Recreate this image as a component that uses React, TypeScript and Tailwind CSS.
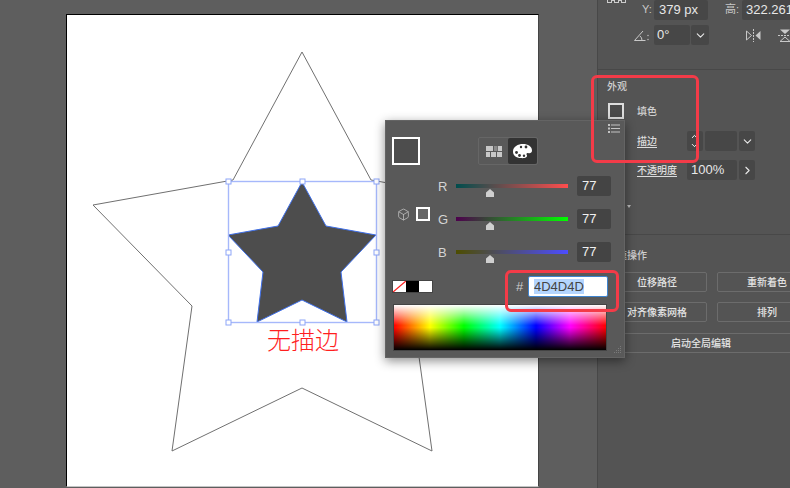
import React from 'react';
import { Box, ChevronDown, ChevronRight, ChevronUp } from 'lucide-react';

const bigStar = '302,52 371,180 511,205 412,306 432,451 302,388 172,451 192,306 93,205 233,180';
const smallStar = '302,182 326,226 376,235 341,272 347,322 302,300 257,322 263,272 228,235 278,226';
const handles = [[228, 181], [302, 181], [376, 181], [228, 252], [376, 252], [228, 322], [302, 322], [376, 322]];

function Field({ className = '', children }: { className?: string; children?: React.ReactNode }) {
    return (
        <div className={`h-5 shrink-0 flex items-center rounded-[2px] bg-[#474747] text-[13px] text-[#e8e8e8] ${className}`}>
            {children}
        </div>
    );
}

function ActionButton({ label, className = '' }: { label: string; className?: string }) {
    return (
        <div className={`h-5 flex items-center justify-center rounded-[2px] border border-[#6c6c6c] text-[10px] font-medium text-[#e4e4e4] ${className}`}>
            {label}
        </div>
    );
}

function Slider({ label, track }: { label: string; track: string }) {
    return (
        <div className="h-5 flex items-center">
            <span className="w-[18px] text-[13px] leading-none text-[#d4d4d4]">{label}</span>
            <div className="relative w-[112px] h-5 flex items-center">
                <div className={`w-full h-1 ${track}`} />
                <svg className="absolute left-[28px] top-[13px]" width="12" height="8" viewBox="0 0 12 8">
                    <path d="M6 0 L10 3.5 V8 H2 V3.5 Z" fill="#cfcfcf" />
                </svg>
            </div>
            <div className="ml-[9px] w-[34px] h-5 flex items-center pl-[5px] rounded-[2px] bg-[#444444] text-[13px] text-[#f0f0f0]">77</div>
        </div>
    );
}

function ColorPopover() {
    return (
        <div className="absolute left-[385px] top-[120px] w-[240px] h-[238px] bg-[#595959] border border-[#646464] pt-[16px] pl-[6px] shadow-[0_3px_10px_rgba(0,0,0,0.45)]">
            <svg className="absolute right-[4px] top-[3px]" width="12" height="9" viewBox="0 0 12 9" fill="#c4c4c4">
                <rect x="0" y="0" width="2" height="2" /><rect x="3" y="0.5" width="9" height="1" />
                <rect x="0" y="3.5" width="2" height="2" /><rect x="3" y="4" width="9" height="1" />
                <rect x="0" y="7" width="2" height="2" /><rect x="3" y="7.5" width="9" height="1" />
            </svg>

            <div className="flex items-start">
                <div className="w-[28px] h-[28px] border-2 border-white bg-[#4d4d4d]" />
                <div className="ml-[58px] flex h-[28px] rounded-[2px] border border-[#666666]">
                    <div className="w-[29px] flex items-center justify-center">
                        <svg width="16" height="11" viewBox="0 0 16 11">
                            <rect x="0" y="0" width="7" height="5" fill="#c8c8c8" />
                            <rect x="8" y="0" width="3.5" height="5" fill="#8a8a8a" />
                            <rect x="12" y="0" width="4" height="5" fill="#c8c8c8" />
                            <rect x="0" y="6" width="4" height="5" fill="#c8c8c8" />
                            <rect x="5" y="6" width="5" height="5" fill="#c8c8c8" />
                            <rect x="11" y="6" width="5" height="5" fill="#c8c8c8" />
                        </svg>
                    </div>
                    <div className="w-[29px] flex items-center justify-center rounded-[2px] bg-[#333333]">
                        <svg width="21" height="16" viewBox="0 0 21 16">
                            <path d="M1 8.5 C1 3.5 6 1 11 1 C16 1 20 3.5 20 7.5 C20 10 18 10.5 16 10 C14.5 9.7 14 11 15 12.5 C15.5 14.5 12 15.5 9 15 C4 15 1 12.5 1 8.5 Z" fill="#ffffff" />
                            <circle cx="4.5" cy="9.5" r="1.4" fill="#333333" />
                            <circle cx="7.5" cy="12.5" r="1.4" fill="#333333" />
                            <circle cx="12" cy="12.8" r="1.2" fill="#333333" />
                            <circle cx="14" cy="4" r="1.4" fill="#333333" />
                            <circle cx="9" cy="4" r="1.2" fill="#333333" />
                        </svg>
                    </div>
                </div>
            </div>

            <div className="mt-[11px] flex items-start">
                <div className="ml-[5px] mt-[31px] w-[41px] flex items-center">
                    <Box size={13} strokeWidth={1.5} className="text-[#bdbdbd]" />
                    <div className="ml-[6px] w-[14px] h-[14px] border-2 border-white bg-[#666666]" />
                </div>
                <div className="flex flex-col gap-[13px]">
                    <Slider label="R" track="bg-[linear-gradient(to_right,#004d4d,#ff4d4d)]" />
                    <Slider label="G" track="bg-[linear-gradient(to_right,#4d004d,#00ff00)]" />
                    <Slider label="B" track="bg-[linear-gradient(to_right,#4d4d00,#4d4dff)]" />
                </div>
            </div>

            <div className="mt-[14px] h-[21px] flex items-center">
                <div className="flex h-[13px] border border-[#444444]">
                    <svg width="13" height="11" viewBox="0 0 13 11">
                        <rect width="13" height="11" fill="#ffffff" />
                        <path d="M0 11 L13 0" stroke="#ff2020" strokeWidth="1.3" />
                    </svg>
                    <div className="w-[13px] bg-black" />
                    <div className="w-[13px] bg-white" />
                </div>
                <span className="ml-[83px] w-[12px] text-[13px] text-[#cccccc]">#</span>
                <div className="w-[80px] h-[21px] flex items-center pl-[5px] rounded-[2px] border border-[#3f84cf] bg-white">
                    <span className="bg-[#b4d5fe] text-[13px] leading-[15px] text-[#444444]">4D4D4D</span>
                </div>
            </div>

            <div className="mt-[7px] ml-[1px] w-[214px] h-[47px] border border-[#444444] bg-[linear-gradient(to_bottom,#ffffff_0%,rgba(255,255,255,0)_45%,rgba(0,0,0,0)_50%,#000000_100%),linear-gradient(to_right,#ff0000_0%,#ffff00_17%,#00ff00_33%,#00ffff_50%,#0000ff_67%,#ff00ff_83%,#ff0000_100%)]" />

            <svg className="absolute right-[2px] bottom-[3px]" width="8" height="8" viewBox="0 0 8 8" fill="#7a7a7a">
                <rect x="6" y="0" width="1" height="1" />
                <rect x="4" y="2" width="1" height="1" /><rect x="6" y="2" width="1" height="1" />
                <rect x="2" y="4" width="1" height="1" /><rect x="4" y="4" width="1" height="1" /><rect x="6" y="4" width="1" height="1" />
                <rect x="0" y="6" width="1" height="1" /><rect x="2" y="6" width="1" height="1" /><rect x="4" y="6" width="1" height="1" /><rect x="6" y="6" width="1" height="1" />
            </svg>
        </div>
    );
}

function PropertiesPanel() {
    return (
        <div className="w-[193px] h-full shrink-0 overflow-hidden border-l border-[#484848] bg-[#545454] text-[10px] text-[#dcdcdc]">
            <div className="h-[70px] border-b border-[#484848]">
                <div className="h-[19px] flex items-center">
                    <svg className="ml-[9px] -mt-[17px] shrink-0" width="20" height="6" viewBox="0 0 20 6" fill="none" stroke="#cccccc">
                        <rect x="0.5" y="0.5" width="4" height="4" /><rect x="7.5" y="0.5" width="4" height="4" /><rect x="14.5" y="0.5" width="4" height="4" />
                        <path d="M4.5 2.5 H7.5 M11.5 2.5 H14.5" />
                    </svg>
                    <span className="ml-[15px] w-[11px] shrink-0 text-[11px] text-[#c8c8c8]">Y:</span>
                    <Field className="ml-[1px] w-[54px] pl-[5px]">379 px</Field>
                    <span className="ml-[17px] w-[16px] shrink-0 text-[11px] text-[#c8c8c8]">高:</span>
                    <Field className="ml-[1px] w-[60px] pl-[4px]">322.261</Field>
                </div>
                <div className="mt-[6px] h-5 flex items-center">
                    <svg className="ml-[36px] shrink-0" width="16" height="11" viewBox="0 0 16 11" fill="none" stroke="#c8c8c8">
                        <path d="M0.5 10.5 H11.5 M0.5 10.5 L9 1 M6 6 Q8 7.5 8 10.5" />
                        <circle cx="14" cy="9.5" r="0.7" fill="#c8c8c8" stroke="none" />
                        <circle cx="14" cy="5.5" r="0.7" fill="#c8c8c8" stroke="none" />
                    </svg>
                    <Field className="ml-[4px] w-[36px] pl-[3px]">0°</Field>
                    <Field className="ml-[1px] w-[18px] justify-center"><ChevronDown size={13} strokeWidth={2} /></Field>
                    <svg className="ml-[37px] shrink-0" width="15" height="13" viewBox="0 0 15 13">
                        <path d="M7.5 0 V13" stroke="#c8c8c8" strokeDasharray="2 1" />
                        <path d="M0.5 2 L5.5 6.5 L0.5 11 Z" fill="none" stroke="#c8c8c8" />
                        <path d="M14.5 2 L9.5 6.5 L14.5 11 Z" fill="#c8c8c8" />
                    </svg>
                    <svg className="ml-[17px] shrink-0" width="14" height="13" viewBox="0 0 14 13">
                        <path d="M0 6.5 H14" stroke="#c8c8c8" strokeDasharray="2 1" />
                        <path d="M2 0.5 L7 5 L12 0.5 Z" fill="#c8c8c8" />
                        <path d="M2 12.5 L7 8 L12 12.5 Z" fill="none" stroke="#c8c8c8" />
                    </svg>
                </div>
            </div>

            <div className="h-[165px] border-b border-[#484848] pl-[9px] pt-[11px]">
                <div className="h-3 leading-3 font-medium text-[#d0d0d0]">外观</div>
                <div className="mt-[10px] h-4 flex items-center">
                    <div className="ml-[1px] w-4 h-4 border-2 border-[#dddddd] bg-[#4a4a4a]" />
                    <span className="ml-[13px] font-medium text-[#d0d0d0]">填色</span>
                </div>
                <div className="mt-[12px] h-5 flex items-center">
                    <span className="ml-[30px] w-[50px] shrink-0 font-medium underline underline-offset-2">描边</span>
                    <Field className="w-4 flex-col justify-center items-start pl-[3px] text-white">
                        <ChevronUp size={9} strokeWidth={2.5} />
                        <ChevronDown size={9} strokeWidth={2.5} />
                    </Field>
                    <Field className="ml-[2px] w-[32px]" />
                    <Field className="ml-[2px] w-4 justify-center"><ChevronDown size={13} strokeWidth={2} /></Field>
                </div>
                <div className="mt-[9px] h-5 flex items-center">
                    <span className="ml-[30px] w-[50px] shrink-0 font-medium underline underline-offset-2">不透明度</span>
                    <Field className="w-[50px] pl-[4px]">100%</Field>
                    <Field className="ml-[2px] w-4 justify-center"><ChevronRight size={13} strokeWidth={2} /></Field>
                </div>
                <div className="mt-[25px] ml-[20px] w-0 h-0 border-x-[2px] border-t-[3px] border-x-transparent border-t-[#bbbbbb]" />
            </div>

            <div className="pl-[9px] pt-[15px]">
                <div className="h-3 leading-3 font-medium text-[#d0d0d0]">快速操作</div>
                <div className="mt-[10px] w-[210px] grid grid-cols-[100px_100px] gap-[10px]">
                    <ActionButton label="位移路径" />
                    <ActionButton label="重新着色" />
                    <ActionButton label="对齐像素网格" />
                    <ActionButton label="排列" />
                </div>
                <ActionButton label="启动全局编辑" className="mt-[11px] w-[188px]" />
            </div>
        </div>
    );
}

export default function App() {
    return (
        <div className="relative w-[790px] h-[488px] overflow-hidden flex bg-[#5e5e5e] font-['Liberation_Sans','Noto_Sans_CJK_SC',sans-serif]">
            <div className="w-[597px] h-full shrink-0 pl-[66px] pt-[14px]">
                <div className="w-[473px] h-[473px] bg-white border-t border-l border-black border-b-[#c4c4c4] border-r-[#444444] border-b border-r">
                    {/* artboard is 66,14 on the page, shift the drawing back so coords stay page coords */}
                    <svg width="471" height="471" viewBox="67 15 471 471">
                        <polygon points={bigStar} fill="none" stroke="#707070" strokeWidth="1" />
                        <polygon points={smallStar} fill="#4d4d4d" stroke="#3f6fe8" strokeWidth="1" />
                        <rect x="228.5" y="181.5" width="148" height="141" fill="none" stroke="#a6b8fb" strokeWidth="1.4" />
                        {handles.map(([x, y]) => (
                            <rect key={`${x}-${y}`} x={x - 2} y={y - 2} width="5" height="5" fill="#ffffff" stroke="#8ea6f8" strokeWidth="1" />
                        ))}
                    </svg>
                </div>
            </div>
            <PropertiesPanel />

            <div className="absolute left-[267px] top-[324px] text-[24px] leading-[34px] font-light text-[#ff1f1f]">无描边</div>
            <ColorPopover />

            <div className="absolute left-[591px] top-[75px] w-[108px] h-[88px] rounded-[6px] border-[3px] border-[#f33b48]" />
            <div className="absolute left-[505px] top-[270px] w-[114px] h-[42px] rounded-[6px] border-[3px] border-[#f33b48]" />
        </div>
    );
}
